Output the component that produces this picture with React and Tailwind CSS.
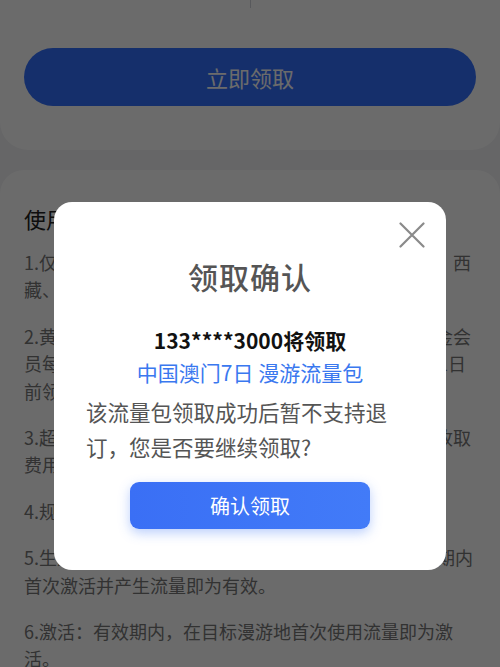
const rules = [
  '1.仅限中国大陆手机号码的用户领取，暂不支持新疆、西藏、港澳台地区号码。',
  '2.黄金会员专享：每自然月可免费领取一次，仅限黄金会员每月限领一次，当月未领取的权益均可顺延至次月1日前领取，逾期作废。',
  '3.超出流量包内所含流量后，将按照漫游地标准资费收取费用，具体以实际账单为准。',
  '4.规则：每个手机号码限领取一次。',
  '5.生效：流量包领取成功后，需在领取日起30天有效期内首次激活并产生流量即为有效。',
  '6.激活：有效期内，在目标漫游地首次使用流量即为激活。',
];

const App = () => {
  return (
    <div
      className="relative h-[667px] overflow-hidden bg-[#f2f3f5]"
      style={{ fontFamily: '"Noto Sans CJK SC", "Noto Sans", sans-serif' }}
    >
      {/* top card */}
      <div className="bg-white rounded-b-[28px] px-6 pb-[44px]">
        <div className="mx-auto w-px h-2 bg-gray-300" />
        <button className="mt-10 w-full h-[58px] rounded-full bg-[#3370fe] text-white text-[22px] leading-none">
          立即领取
        </button>
      </div>

      {/* rules card */}
      <div className="mt-5 bg-white rounded-t-[24px] px-6 pt-[33px] pb-8">
        <h2 className="text-[22px] leading-[30px] text-[#222]">使用说明</h2>
        <div className="mt-4 flex flex-col gap-[19px]">
          {rules.map((r) => (
            <p key={r} className="text-[18px] leading-[27.4px] text-[#777]">
              {r}
            </p>
          ))}
        </div>
      </div>

      {/* overlay */}
      <div className="fixed inset-0 bg-black/[0.58] flex justify-center pt-[202px]">
        <div className="relative w-[392px] h-[368px] bg-white rounded-[18px] px-8 pt-[56px] pb-[41px] flex flex-col items-center">
          <button className="absolute top-[20px] right-[21px] w-[26px] h-[26px] text-[#8a8a8a]">
            <svg viewBox="0 0 26 26" className="w-full h-full" fill="none" stroke="currentColor" strokeWidth="2.2" strokeLinecap="round">
              <path d="M1.5 1.5 L24.5 24.5 M24.5 1.5 L1.5 24.5" />
            </svg>
          </button>
          <h3 className="text-[30px] leading-[36px] font-medium tracking-[1px] text-[#555]">领取确认</h3>
          <p className="mt-[30px] text-[21px] leading-[32px] font-bold text-[#111]">133****3000将领取</p>
          <p className="text-[21px] leading-[32px] text-[#3a78ef]">中国澳门7日 漫游流量包</p>
          <p className="mt-[6px] self-stretch text-[21.5px] leading-[35px] text-[#555]">
            该流量包领取成功后暂不支持退订，您是否要继续领取?
          </p>
          <button className="mt-[18px] w-[240px] h-[47px] rounded-[9px] bg-gradient-to-r from-[#3a6ff5] to-[#427bf8] text-white text-[20px] shadow-[0_4px_12px_rgba(59,118,246,0.35)]">
            确认领取
          </button>
        </div>
      </div>
    </div>
  );
};

export default App;
